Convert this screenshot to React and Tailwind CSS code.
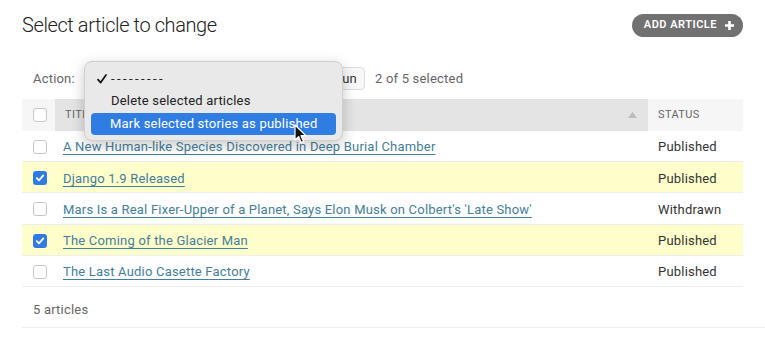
import { useState } from 'react';

// Lista de articulos del admin, con el menu de acciones abierto.
const articulos = [
  { titulo: 'A New Human-like Species Discovered in Deep Burial Chamber', estado: 'Published', sel: false },
  { titulo: 'Django 1.9 Released', estado: 'Published', sel: true },
  { titulo: "Mars Is a Real Fixer-Upper of a Planet, Says Elon Musk on Colbert's 'Late Show'", estado: 'Withdrawn', sel: false },
  { titulo: 'The Coming of the Glacier Man', estado: 'Published', sel: true },
  { titulo: 'The Last Audio Casette Factory', estado: 'Published', sel: false },
];

function Check({ on }) {
  if (on) {
    return (
      <span className="flex h-[14px] w-[14px] items-center justify-center rounded-[3px] bg-[#2e7be6]">
        <svg width="10" height="10" viewBox="0 0 10 10" fill="none">
          <path d="M1.8 5.2 4 7.4 8.3 2.4" stroke="white" strokeWidth="1.8" strokeLinecap="round" strokeLinejoin="round" />
        </svg>
      </span>
    );
  }
  return <span className="block h-[14px] w-[14px] rounded-[3px] border border-[#c9c9c9] bg-white" />;
}

export default function App() {
  const [filas] = useState(articulos);

  return (
    <div className="relative h-[348px] w-[765px] overflow-hidden bg-white pl-[22px] text-[13px] tracking-[0.2px] text-[#333]" style={{ fontFamily: 'Roboto, "Noto Sans", sans-serif' }}>
      <div className="flex h-[50px] items-center justify-between pr-[22px]">
        <h1 className="text-[20px] font-light tracking-[-0.4px] text-[#222]">Select article to change</h1>
        <button className="flex h-[23px] items-center gap-[7px] rounded-full bg-[#717171] pl-[12px] pr-[8px] text-[11px] font-semibold uppercase tracking-[0.5px] text-white">
          ADD ARTICLE
          <svg width="11" height="11" viewBox="0 0 11 11">
            <path d="M5.5 1v9M1 5.5h9" stroke="white" strokeWidth="2.6" />
          </svg>
        </button>
      </div>

      <div className="flex h-[49px] items-center pl-[11px] pt-[8px]">
        <span className="w-[44px] text-[#666]">Action:</span>
        <span className="ml-[249px] flex h-[23px] w-[39px] items-center justify-end rounded-[4px] border border-[#ddd] bg-[#f8f8f8] pr-[7px] text-[#333]">Run</span>
        <span className="ml-[10px] text-[#666]">2 of 5 selected</span>
      </div>

      <div className="w-[721px]">
        <div className="flex h-[32px] items-stretch text-[11px] uppercase text-[#666]">
          <div className="flex w-[33px] items-center bg-[#f6f6f6] pl-[11px]"><Check on={false} /></div>
          <div className="flex flex-1 items-center justify-between bg-[#e4e4e4] pl-[10px] pr-[11px]">
            <span className="tracking-[0.4px]">Title</span>
            <svg width="9" height="6" viewBox="0 0 9 6"><path d="M4.5 0 9 6H0z" fill="#bbb" /></svg>
          </div>
          <div className="flex w-[95px] items-center bg-[#f6f6f6] pl-[10px] tracking-[0.4px]">Status</div>
        </div>
        {filas.map((f) => (
          <div key={f.titulo} className={`flex h-[31.2px] items-center border-b border-[#eee] pt-[2px] ${f.sel ? 'bg-[#ffffcc]' : 'bg-white'}`}>
            <div className="w-[33px] pl-[11px]"><Check on={f.sel} /></div>
            <div className="flex-1 pl-[8px]">
              <a href="#" className="text-[#447e9b] underline decoration-[#447e9b] underline-offset-[3px]">{f.titulo}</a>
            </div>
            <div className="w-[95px] pl-[10px] text-[#333]">{f.estado}</div>
          </div>
        ))}
      </div>

      <div className="flex h-[41px] items-center border-b border-[#eee] pl-[11px] pt-[5px] text-[#666]">5 articles</div>

      <div className="absolute left-[84px] top-[61px] w-[259px] rounded-[8px] border border-[#d0d0d0] bg-[#e9e9e9] px-[6px] pb-[5px] pt-[6px] text-[13px] text-[#222] shadow-[0_4px_14px_rgba(0,0,0,0.22)]">
        <div className="flex h-[21px] items-center">
          <span className="flex w-[20px] justify-center pl-[2px]">
            <svg width="10" height="10" viewBox="0 0 10 10" fill="none">
              <path d="M1 5.6 3.7 8.6 9 1" stroke="#111" strokeWidth="1.7" strokeLinecap="round" strokeLinejoin="round" />
            </svg>
          </span>
          <span className="tracking-[2.4px]">---------</span>
        </div>
        <div className="flex h-[24px] items-center pl-[20px]">Delete selected articles</div>
        <div className="flex h-[22px] items-center rounded-[4px] bg-[#2f7de3] pl-[19px] text-white">Mark selected stories as published</div>
      </div>

      <svg className="absolute left-[294px] top-[124px]" width="14" height="20" viewBox="0 0 14 20">
        <path d="M1 1v15l3.6-3.4 2.6 6 2.4-1-2.6-5.9H12z" fill="#111" stroke="white" strokeWidth="1.2" strokeLinejoin="round" />
      </svg>
    </div>
  );
}
